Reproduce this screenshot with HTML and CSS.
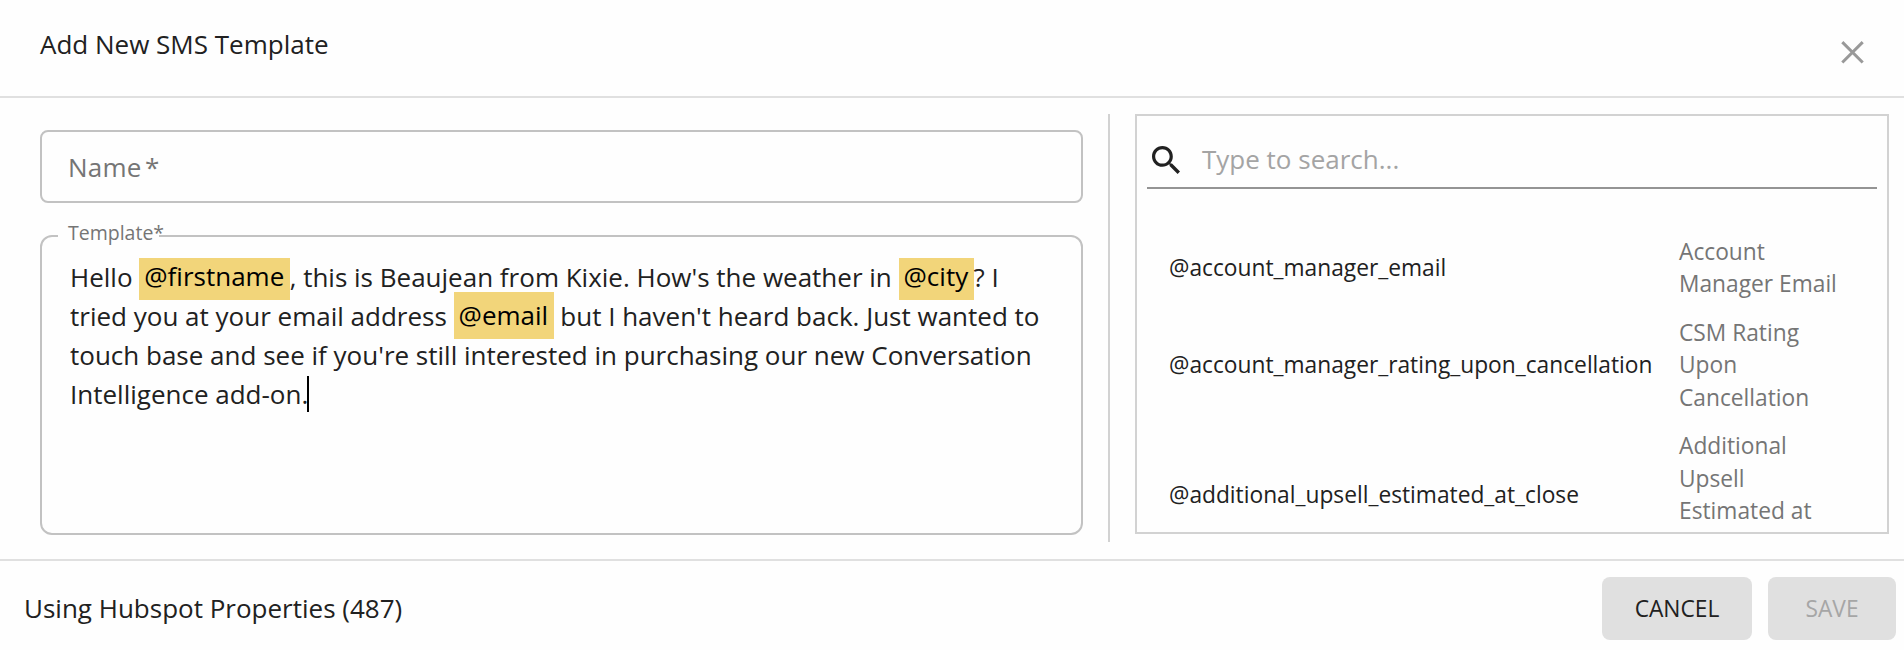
FILE: index.html
```html
<!DOCTYPE html>
<html lang="en">
<head>
<meta charset="utf-8">
<title>Add New SMS Template</title>
<link rel="stylesheet" href="styles.css">
</head>
<body>
<div class="dialog">
  <header class="header">
    <h1 class="title">Add New SMS Template</h1>
    <svg class="close" viewBox="0 0 24 24"><path d="M1.3 2.1 21.7 22.5M21.7 2.1 1.3 22.5"/></svg>
  </header>
  <main class="content">
    <section class="form">
      <div class="name-field"><span>Name</span><span class="star">*</span></div>
      <fieldset class="template-field">
        <legend class="legend"><span class="legend-text">Template*</span></legend>
        <div class="editor"><span>Hello </span><span class="tag">@firstname</span><span>, this is Beaujean from Kixie. How's the weather in </span><span class="tag">@city</span><span>? I</span><br><span>tried you at your email address </span><span class="tag">@email</span><span> but I haven't heard back. Just wanted to</span><br><span>touch base and see if you're still interested in purchasing our new Conversation</span><br><span>Intelligence add-on.</span><span class="caret"></span></div>
      </fieldset>
    </section>
    <div class="divider"></div>
    <aside class="panel">
      <div class="search">
        <svg class="search-icon" viewBox="3 3 17.49 17.49"><path d="M15.5 14h-.79l-.28-.27C15.41 12.59 16 11.11 16 9.5 16 5.91 13.09 3 9.5 3S3 5.91 3 9.5 5.91 16 9.5 16c1.61 0 3.09-.59 4.23-1.57l.27.28v.79l5 4.99L20.49 19l-4.99-5zm-6 0C7.01 14 5 11.99 5 9.5S7.01 5 9.5 5 14 7.01 14 9.5 11.99 14 9.5 14z"/></svg>
        <span>Type to search...</span>
      </div>
      <ul class="list">
        <li class="row"><span class="key">@account_manager_email</span><span class="label">Account Manager Email</span></li>
        <li class="row"><span class="key">@account_manager_rating_upon_cancellation</span><span class="label">CSM Rating Upon Cancellation</span></li>
        <li class="row"><span class="key">@additional_upsell_estimated_at_close</span><span class="label">Additional Upsell Estimated at Close</span></li>
      </ul>
    </aside>
  </main>
  <footer class="footer">
    <span class="status">Using Hubspot Properties (487)</span>
    <button class="btn cancel">CANCEL</button>
    <button class="btn save" disabled>SAVE</button>
  </footer>
</div>
</body>
</html>
```
FILE: styles.css
```css
* { box-sizing: border-box; }
body { margin: 0; background: #fefefe; color: #212121; font: 26px/39px "Open Sans", sans-serif; }
.dialog { display: flex; flex-direction: column; width: 1904px; height: 650px; overflow: hidden; }
.header { display: flex; justify-content: space-between; height: 98px; padding: 25px 39px 0 40px; border-bottom: 2px solid #e0e0e0; }
.title { margin: 0; font: inherit; }
.close { width: 24px; height: 24px; margin-top: 15px; fill: none; stroke: #999; stroke-width: 3; }
.content { display: flex; height: 461px; padding: 16px 15px 0 40px; }
.form { width: 1043px; padding-top: 16px; }
.name-field { display: flex; gap: 3.5px; height: 73px; padding: 16px 26px; border: 2px solid #c2c2c2; border-radius: 8px; color: #757575; letter-spacing: 0.2px; }
.template-field { height: 311px; margin: 21px 0 0; padding: 0 27px; border: 2px solid #c2c2c2; border-radius: 12px; }
.legend { height: 24px; margin-left: -11px; padding: 0; width: 101px; color: #757575; font-size: 19.5px; line-height: 18px; white-space: nowrap; }
.legend-text { margin-left: 10px; }
.editor { height: 270px; margin: 10px 0 0 1px; overflow: hidden; white-space: nowrap; }
.tag { padding: 5px 5.4px 6px 5px; background: #f2d57a; color: #000; line-height: 30px; vertical-align: 1px; }
.caret { display: inline-block; width: 2px; height: 36px; margin-left: -1px; background: #000; vertical-align: -8px; }
.divider { width: 2px; height: 428px; margin: 0 25px; background: #d2d2d2; }
.panel { display: flex; flex-direction: column; width: 754px; height: 420px; padding: 0 10px; border: 2px solid #d2d2d2; overflow: hidden; }
.search { display: flex; flex: none; gap: 22px; height: 73px; padding: 24px 5px 0; border-bottom: 2px solid #949494; color: #a4a4a4; }
.search-icon { width: 28px; height: 28px; margin-top: 6px; fill: #212121; }
.list { margin: 0; padding: 38.5px 21px 0 22px; list-style: none; font-size: 22.75px; line-height: 32.5px; }
.row { display: flex; align-items: center; gap: 27px; padding: 8px 0; }
.key { width: 483px; white-space: nowrap; }
.label { width: 170px; color: #757575; }
.footer { display: flex; align-items: center; height: 91px; padding: 6px 8px 0 24px; border-top: 2px solid #e0e0e0; }
.status { flex: 1; }
.btn { height: 63px; padding: 0; border: 0; border-radius: 8px; background: #e0e0e0; color: #212121; font: 500 22.75px/40px "Open Sans", sans-serif; }
.cancel { width: 150px; margin-right: 16px; }
.save { width: 128px; color: #a6a6a6; }
```
